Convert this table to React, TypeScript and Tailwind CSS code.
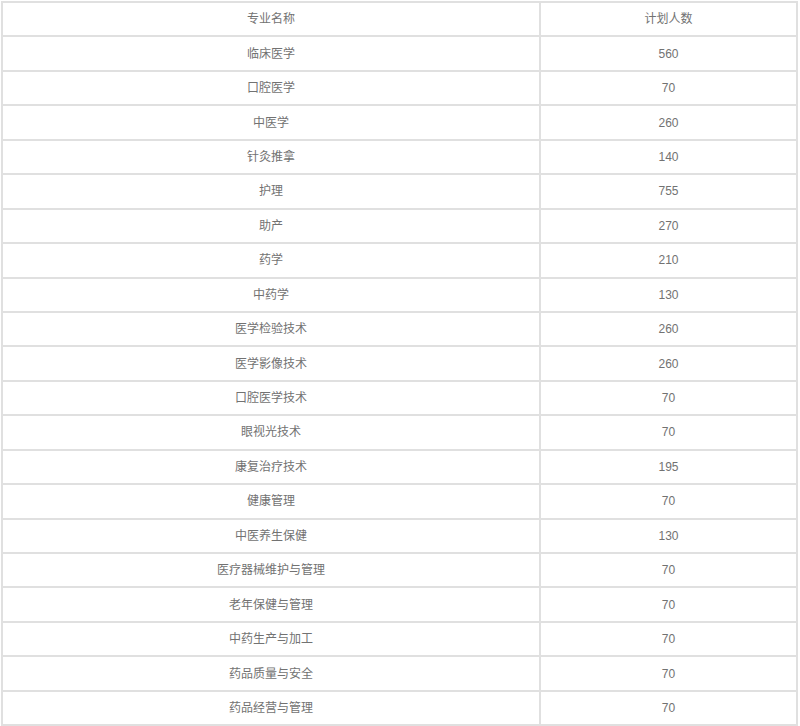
const rows: [string, string][] = [
  ['临床医学', '560'],
  ['口腔医学', '70'],
  ['中医学', '260'],
  ['针灸推拿', '140'],
  ['护理', '755'],
  ['助产', '270'],
  ['药学', '210'],
  ['中药学', '130'],
  ['医学检验技术', '260'],
  ['医学影像技术', '260'],
  ['口腔医学技术', '70'],
  ['眼视光技术', '70'],
  ['康复治疗技术', '195'],
  ['健康管理', '70'],
  ['中医养生保健', '130'],
  ['医疗器械维护与管理', '70'],
  ['老年保健与管理', '70'],
  ['中药生产与加工', '70'],
  ['药品质量与安全', '70'],
  ['药品经营与管理', '70'],
];

export default function App() {
  return (
    <div className="w-[800px] h-[726px] bg-white pl-[1px] pt-[1px] overflow-hidden">
      <table
        className="w-[797px] border-collapse border-2 border-[#e0e0e0] text-[12px] text-[#727272] [font-family:'Liberation_Sans','Noto_Sans_CJK_SC',sans-serif]"
      >
        <tbody>
          <tr className="h-[34.45px]">
            <td className="w-[538px] border-2 border-[#e0e0e0] text-center p-0">专业名称</td>
            <td className="border-2 border-[#e0e0e0] text-center p-0">计划人数</td>
          </tr>
          {rows.map(([name, count]) => (
            <tr key={name} className="h-[34.45px]">
              <td className="border-2 border-[#e0e0e0] text-center p-0">{name}</td>
              <td className="border-2 border-[#e0e0e0] text-center p-0">{count}</td>
            </tr>
          ))}
        </tbody>
      </table>
    </div>
  );
}
